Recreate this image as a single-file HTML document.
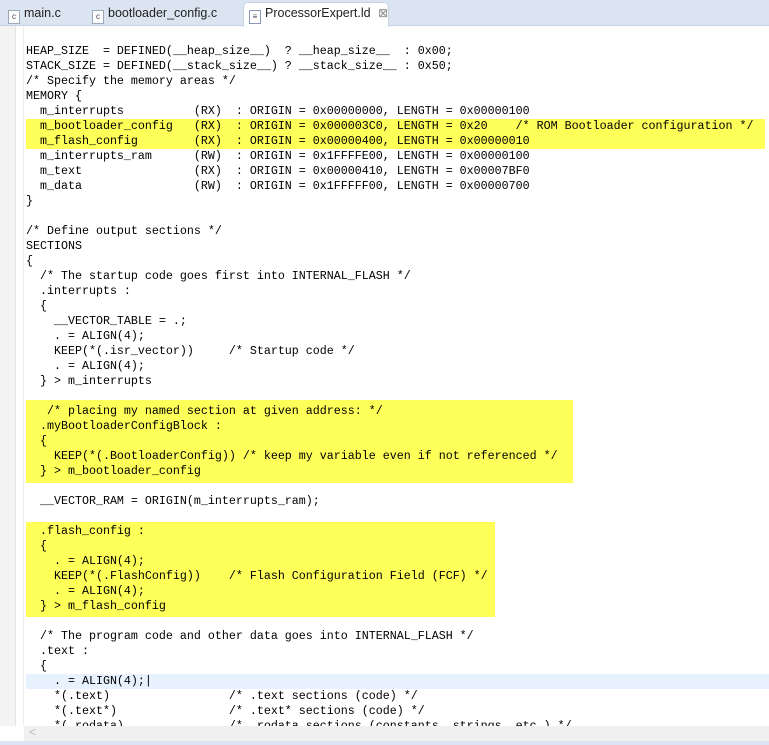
<!DOCTYPE html>
<html><head><style>
body{margin:0;width:769px;height:745px;overflow:hidden;background:#fff;font-family:"Liberation Sans",sans-serif;position:relative}
.tabbar{position:absolute;left:0;top:0;width:769px;height:25px;background:#dbe5f1;border-bottom:1px solid #c5d2e2}
.tab{position:absolute;top:6px;font-size:12.5px;color:#222;}
.ic{display:inline-block;width:10px;height:12px;border:1px solid #9aa8b8;background:#fff;font-size:8px;line-height:12px;text-align:center;color:#445;vertical-align:-2px;margin-right:4px}
.active{position:absolute;left:243px;top:2px;width:144px;height:24px;background:#fff;border:1px solid #c5d2e2;border-bottom:none;border-radius:5px 5px 0 0}
.gutter{position:absolute;left:0;top:26px;width:15px;height:700px;background:#f4f4f4;border-right:1px solid #e4e4e4}
.g2{position:absolute;left:23px;top:26px;width:1px;height:700px;background:#eee}
pre{position:absolute;left:26px;top:44px;margin:0;font-family:"Liberation Mono",monospace;font-size:11.67px;line-height:15px;color:#000}
.hl{position:absolute;background:#ffff5a}
.cur{position:absolute;left:26px;top:674px;width:743px;height:15px;background:#e8f2fe}
.sb{position:absolute;left:24px;top:726px;width:745px;height:15px;background:#f0f0f0}
</style></head><body>
<div class="tabbar"></div>
<div class="active"></div>
<div class="tab" style="left:8px"><span class="ic">c</span>main.c</div>
<div class="tab" style="left:92px"><span class="ic">c</span>bootloader_config.c</div>
<div class="tab" style="left:249px"><span class="ic" style="border-color:#8899bb">≡</span>ProcessorExpert.ld <span style="color:#888;font-size:12px;margin-left:4px">⊠</span></div>
<div class="gutter"></div><div class="g2"></div>
<div class="hl" style="left:26px;top:119px;width:739px;height:30px"></div>
<div class="hl" style="left:26px;top:400px;width:547px;height:83px"></div>
<div class="hl" style="left:26px;top:522px;width:469px;height:95px"></div>
<div class="cur"></div>
<pre>HEAP_SIZE  = DEFINED(__heap_size__)  ? __heap_size__  : 0x00;
STACK_SIZE = DEFINED(__stack_size__) ? __stack_size__ : 0x50;
/* Specify the memory areas */
MEMORY {
  m_interrupts          (RX)  : ORIGIN = 0x00000000, LENGTH = 0x00000100
  m_bootloader_config   (RX)  : ORIGIN = 0x000003C0, LENGTH = 0x20    /* ROM Bootloader configuration */
  m_flash_config        (RX)  : ORIGIN = 0x00000400, LENGTH = 0x00000010
  m_interrupts_ram      (RW)  : ORIGIN = 0x1FFFFE00, LENGTH = 0x00000100
  m_text                (RX)  : ORIGIN = 0x00000410, LENGTH = 0x00007BF0
  m_data                (RW)  : ORIGIN = 0x1FFFFF00, LENGTH = 0x00000700
}

/* Define output sections */
SECTIONS
{
  /* The startup code goes first into INTERNAL_FLASH */
  .interrupts :
  {
    __VECTOR_TABLE = .;
    . = ALIGN(4);
    KEEP(*(.isr_vector))     /* Startup code */
    . = ALIGN(4);
  } &gt; m_interrupts

   /* placing my named section at given address: */
  .myBootloaderConfigBlock :
  {
    KEEP(*(.BootloaderConfig)) /* keep my variable even if not referenced */
  } &gt; m_bootloader_config

  __VECTOR_RAM = ORIGIN(m_interrupts_ram);

  .flash_config :
  {
    . = ALIGN(4);
    KEEP(*(.FlashConfig))    /* Flash Configuration Field (FCF) */
    . = ALIGN(4);
  } &gt; m_flash_config

  /* The program code and other data goes into INTERNAL_FLASH */
  .text :
  {
    . = ALIGN(4);|
    *(.text)                 /* .text sections (code) */
    *(.text*)                /* .text* sections (code) */
    *(.rodata)               /* .rodata sections (constants, strings, etc.) */</pre>
<div class="sb"><span style="position:absolute;left:5px;top:-1px;color:#bbb;font-size:12px">&lt;</span></div>
<div style="position:absolute;left:0;top:741px;width:769px;height:4px;background:#dbe5f1"></div>
</body></html>
